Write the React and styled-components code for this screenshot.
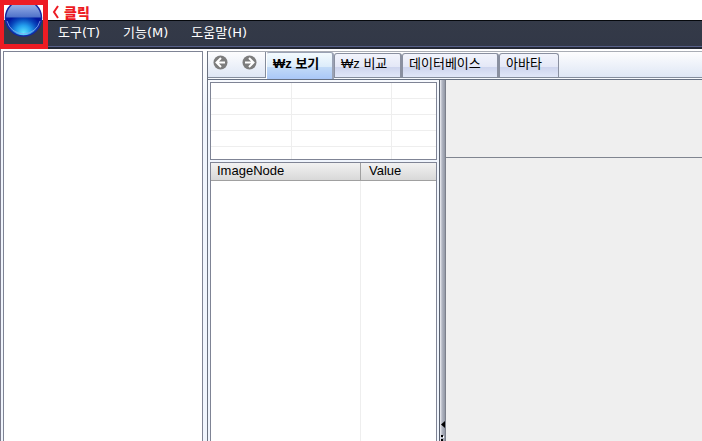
import React, { useState } from 'react'
import styled, { createGlobalStyle, css } from 'styled-components'

const GlobalStyle = createGlobalStyle`
  * {
    box-sizing: border-box;
  }

  body {
    margin: 0;
    overflow: hidden;
    background: #ffffff;
    color: #000000;
    font-family: 'Liberation Sans', 'Noto Sans CJK KR', sans-serif;
    font-size: 13px;
    line-height: 16px;
  }

  button {
    margin: 0;
    font: inherit;
  }
`

const Window = styled.div`
  display: flex;
  flex-direction: column;
  height: 100vh;
  border-left: 1px solid #7b7b8c;
`

const TitleBar = styled.header`
  flex: none;
  display: flex;
  align-items: center;
  height: 20px;
  margin-left: -1px;
  padding: 4px 0 0 52px;
  background: #ffffff;
`

const Hint = styled.span`
  display: flex;
  align-items: center;
  gap: 4px;
  color: #ed1c24;
  font-family: 'Noto Sans CJK KR', sans-serif;
  font-size: 14px;
  font-weight: 900;
`

const MenuBar = styled.nav`
  flex: none;
  display: flex;
  gap: 23px;
  height: 29px;
  margin-left: -1px;
  padding: 3px 58px 0;
  background: linear-gradient(#343a48, #323847);
  border-top: 1px solid #05080c;
  border-bottom: 2px solid #242834;
  box-shadow: inset 0 -1px #58618a;
  font-family: 'DejaVu Sans', 'Noto Sans CJK KR', sans-serif;
`

const MenuItem = styled.button`
  height: 18px;
  padding: 0;
  border: 0;
  background: none;
  color: #ffffff;
  white-space: nowrap;
`

const StartButton = styled.button`
  position: absolute;
  top: 0;
  left: 0;
  width: 48px;
  height: 49px;
  padding: 0;
  overflow: hidden;
  border: 5px solid #ed1c24;
  border-left-width: 4px;
  background: linear-gradient(#ffffff 15px, #343a48 15px);

  svg {
    display: block;
  }
`

const Body = styled.div`
  flex: 1;
  display: flex;
  gap: 4px;
  min-height: 0;
  padding: 2px 0 0 2px;
  background: linear-gradient(#ffffff, #f0f5fd 60px);
`

const Sidebar = styled.aside`
  flex: 0 0 200px;
  border: 1px solid #7f8495;
  border-bottom: 0;
  background: #ffffff;
`

const Main = styled.main`
  flex: 1;
  display: flex;
  flex-direction: column;
  min-width: 0;
  border-left: 1px solid #6b7280;
`

const TabStrip = styled.div`
  flex: none;
  display: flex;
  align-items: flex-end;
  height: 27px;
  border-top: 1px solid #a9adb5;
  border-bottom: 1px solid #858d9c;
  background: linear-gradient(#fdfdfe, #dfe7f5);
`

const NavButtons = styled.div`
  display: flex;
  gap: 14px;
  width: 58px;
  height: 25px;
  padding: 3px 0 0 5px;
  border-right: 1px solid #858d9c;
`

const NavButton = styled.button`
  display: block;
  width: 15px;
  height: 15px;
  padding: 0;
  border: 0;
  background: none;

  svg {
    display: block;
  }
`

const Tab = styled.button`
  flex: none;
  width: ${({ $width }) => $width}px;
  height: 24px;
  padding: 0 0 3px 6px;
  border: 1px solid #8a90a0;
  border-bottom: 0;
  border-right-width: 2px;
  border-radius: 3px 3px 0 0;
  background: linear-gradient(#f2f4fc 0, #e4e8f7 55%, #cdd4ed 56%, #e1e7f8 100%);
  color: #000000;
  text-align: left;
  white-space: nowrap;

  &:last-child {
    border-right-width: 1px;
  }

  ${({ $active }) =>
    $active &&
    css`
      height: 27px;
      margin-bottom: -2px;
      padding-bottom: 4px;
      border-color: #9aa2b4;
      border-left-color: #ffffff;
      background: linear-gradient(#f4fbfe 0, #dcecfa 52%, #c3dbf7 53%, #a9c7f7 100%);
      font-weight: 700;
    `}
`

const Workspace = styled.div`
  flex: 1;
  display: flex;
  min-height: 0;
  margin-top: 1px;
  border-top: 1px solid #667082;
`

const Lists = styled.section`
  flex: 0 0 232px;
  display: flex;
  flex-direction: column;
  gap: 2px;
  padding: 2px 2px 0;
  border-right: 1px solid #59606e;
`

const Frame = styled.div`
  flex: ${({ $fill }) => ($fill ? '1' : '0 0 78px')};
  overflow: hidden;
  border: 1px solid #7f8495;
  border-bottom-width: ${({ $fill }) => ($fill ? 0 : 1)}px;
  background: #ffffff;
`

const Grid = styled.table`
  width: 100%;
  border-spacing: 0;
  table-layout: fixed;

  td {
    height: 16px;
    padding: 0;
    border-right: 1px solid #eeeeee;
    border-bottom: 1px solid #eeeeee;
  }

  td:last-child {
    border-right: 0;
  }
`

const NodeTable = styled.table`
  width: 100%;
  height: 100%;
  border-spacing: 0;
  table-layout: fixed;

  th {
    height: 18px;
    padding: 0 0 2px 8px;
    border-bottom: 1px solid #a0a0a0;
    background: linear-gradient(#f2f2f2, #d8d8d8);
    font-weight: 400;
    line-height: 15px;
    text-align: left;
  }

  th:first-child {
    padding-left: 6px;
    border-right: 1px solid #a0a0a0;
  }

  td:first-child {
    border-right: 1px solid #eeeeee;
  }
`

const Splitter = styled.div`
  flex: 0 0 5px;
  display: flex;
  flex-direction: column;
  align-items: center;
  justify-content: flex-end;
  background: linear-gradient(to right, #f0f1f5, #b4b8c4 40%, #9298a5);

  svg {
    display: block;
  }
`

const Preview = styled.section`
  flex: 1;
  min-width: 0;
  border-left: 1px solid #7c808b;
  background: #efefef;
`

const PreviewHeader = styled.div`
  height: 78px;
  border-bottom: 1px solid #808590;
`

function Orb() {
  return (
    <svg width="39" height="39" viewBox="4 5 39 39" aria-hidden="true">
      <defs>
        <linearGradient id="orbTop" x1="0" y1="0" x2="0" y2="1">
          <stop offset="0" stopColor="#b4c6ee" />
          <stop offset="0.55" stopColor="#7c98dc" />
          <stop offset="1" stopColor="#4d70c8" />
        </linearGradient>
        <radialGradient id="orbGlow" cx="23.5" cy="33" r="19" gradientUnits="userSpaceOnUse">
          <stop offset="0" stopColor="#5fe5ff" />
          <stop offset="0.4" stopColor="#249fed" />
          <stop offset="0.75" stopColor="#0846bb" />
          <stop offset="1" stopColor="#0119a0" />
        </radialGradient>
      </defs>
      <circle cx="23.5" cy="18" r="18" fill="url(#orbGlow)" />
      <path d="M5.5 17.5a18 18 0 0 1 36 0z" fill="url(#orbTop)" />
      <circle cx="23.5" cy="18" r="18" fill="none" stroke="#1429a2" strokeWidth="1.5" />
      <path d="M7 21a17 17 0 0 0 33 0" fill="none" stroke="#8ba8ee" strokeWidth="0.8" />
    </svg>
  )
}

function Arrow({ forward }) {
  return (
    <svg width="15" height="15" viewBox="0 0 15 15" aria-hidden="true">
      <circle cx="7.5" cy="7.5" r="7" fill="#7d7d7d" />
      <path
        d={forward ? 'M3 7.5h8M7 3l4.5 4.5L7 12' : 'M12 7.5H4M8 3L3.5 7.5 8 12'}
        fill="none"
        stroke="#ffffff"
        strokeWidth="2"
      />
    </svg>
  )
}

const menus = ['도구(T)', '기능(M)', '도움말(H)']

const tabs = [
  { label: '₩z 보기', width: 68 },
  { label: '₩z 비교', width: 68 },
  { label: '데이터베이스', width: 97 },
  { label: '아바타', width: 60 }
]

export default function App() {
  const [active, setActive] = useState(0)

  return (
    <>
      <GlobalStyle />
      <Window>
        <TitleBar>
          <Hint>
            <svg width="8" height="14" viewBox="0 0 8 14" aria-hidden="true">
              <path d="M6 1L2 7l4 6" fill="none" stroke="#ed1c24" strokeWidth="2" />
            </svg>
            클릭
          </Hint>
        </TitleBar>
        <MenuBar>
          {menus.map(label => (
            <MenuItem key={label}>{label}</MenuItem>
          ))}
        </MenuBar>
        <StartButton aria-label="시작">
          <Orb />
        </StartButton>
        <Body>
          <Sidebar />
          <Main>
            <TabStrip>
              <NavButtons>
                <NavButton aria-label="뒤로">
                  <Arrow />
                </NavButton>
                <NavButton aria-label="앞으로">
                  <Arrow forward />
                </NavButton>
              </NavButtons>
              {tabs.map(({ label, width }, i) => (
                <Tab key={label} $width={width} $active={i === active} onClick={() => setActive(i)}>
                  {label}
                </Tab>
              ))}
            </TabStrip>
            <Workspace>
              <Lists>
                <Frame>
                  <Grid>
                    <colgroup>
                      <col width="81" />
                      <col width="100" />
                      <col />
                    </colgroup>
                    <tbody>
                      {[0, 1, 2, 3, 4].map(row => (
                        <tr key={row}>
                          <td />
                          <td />
                          <td />
                        </tr>
                      ))}
                    </tbody>
                  </Grid>
                </Frame>
                <Frame $fill>
                  <NodeTable>
                    <colgroup>
                      <col width="150" />
                      <col />
                    </colgroup>
                    <thead>
                      <tr>
                        <th>ImageNode</th>
                        <th>Value</th>
                      </tr>
                    </thead>
                    <tbody>
                      <tr>
                        <td />
                        <td />
                      </tr>
                    </tbody>
                  </NodeTable>
                </Frame>
              </Lists>
              <Splitter>
                <svg width="5" height="20" viewBox="0 0 5 20" aria-hidden="true">
                  <path d="M5 0v7L1 3.5z" fill="#000000" />
                  <path d="M1 14h2v2H1zM1 18h2v2H1z" fill="#000000" />
                  <path d="M3 15h1v2H3z" fill="#ffffff" />
                </svg>
              </Splitter>
              <Preview>
                <PreviewHeader />
              </Preview>
            </Workspace>
          </Main>
        </Body>
      </Window>
    </>
  )
}
